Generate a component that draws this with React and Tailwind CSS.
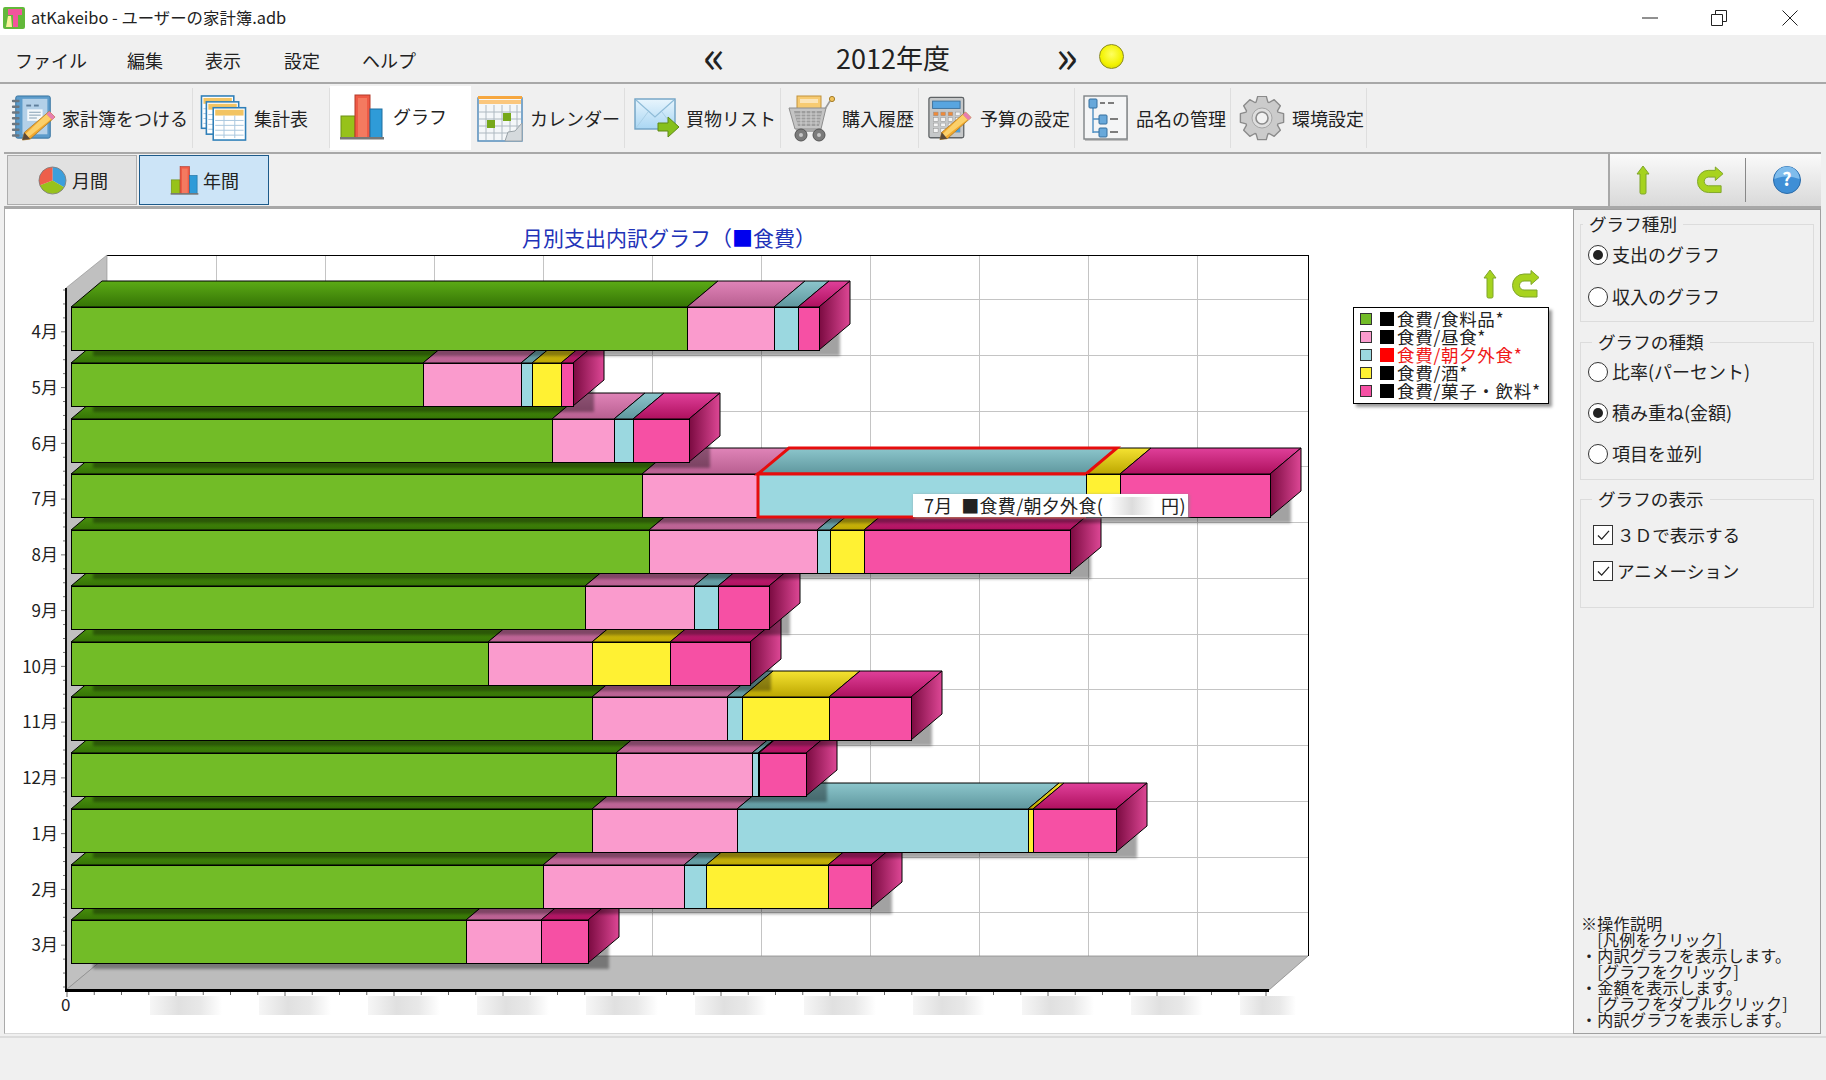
import React from "react";

// Bar ends per month: food, lunch, dining out, alcohol, snacks (page x coordinates)
const MONTHS = [
  ["4月", [687, 774, 798, 798, 819]],
  ["5月", [423, 521, 532, 561, 573]],
  ["6月", [552, 614, 633, 633, 689]],
  ["7月", [642, 758, 1086, 1120, 1270]],
  ["8月", [649, 817, 830, 864, 1070]],
  ["9月", [585, 694, 718, 718, 769]],
  ["10月", [488, 592, 592, 670, 750]],
  ["11月", [592, 727, 742, 829, 911]],
  ["12月", [616, 752, 758, 759, 806]],
  ["1月", [592, 737, 1028, 1033, 1116]],
  ["2月", [543, 684, 706, 828, 871]],
  ["3月", [466, 541, 541, 541, 588]],
];

const FRONT = ["#72bc27", "#fa9bcd", "#9bd8e0", "#fff133", "#f650a4"];
const TOP = [
  ["#5cab16", "#357405"],
  ["#e084b8", "#b85f90"],
  ["#8cc6cc", "#5f979e"],
  ["#f5e332", "#bca600"],
  ["#e0409a", "#ae105e"],
];
const BAR_H = 43;
const DX = 31;
const DY = 26;
const X0 = 71;

const rowTop = (i) => Math.round(307 + 55.75 * i);

const GRID_X = Array.from({ length: 11 }, (_, k) => 107 + 109 * k);
const GRID_Y = Array.from({ length: 12 }, (_, k) => Math.round(299 + 55.75 * k));

function BarRow({ index, ends }) {
  const top = rowTop(index);
  const bottom = top + BAR_H;
  const last = ends[4];
  const starts = [X0, ...ends.slice(0, 4)];
  return (
    <g>
      <rect x={X0 + 22} y={top + 16} width={last - X0 - 1} height={BAR_H - 10} fill="#000" opacity="0.36" filter="url(#soft)" />
      {ends.map((end, s) => {
        const start = starts[s];
        if (end <= start) return null;
        return (
          <polygon
            key={s}
            points={`${start},${top} ${start + DX},${top - DY} ${end + DX},${top - DY} ${end},${top}`}
            fill={`url(#top${s})`}
            stroke="#000"
          />
        );
      })}
      <polygon
        points={`${last},${top} ${last + DX},${top - DY} ${last + DX},${bottom - DY} ${last},${bottom}`}
        fill="url(#side)"
        stroke="#000"
      />
      {ends.map((end, s) => {
        const start = starts[s];
        if (end <= start) return null;
        return <rect key={s} x={start} y={top} width={end - start} height={BAR_H} fill={FRONT[s]} stroke="#000" shapeRendering="crispEdges" />;
      })}
    </g>
  );
}

function Chart() {
  const sel = { x1: 758, x2: 1086, top: rowTop(3) };
  const leftTicks = Array.from({ length: 51 }, (_, k) => 290 + 13.94 * k);
  const bottomTicks = Array.from({ length: 45 }, (_, k) => 67 + 27.25 * k);
  return (
    <svg width="1568" height="824" viewBox="5 209 1568 824" className="block">
      <defs>
        {TOP.map((c, s) => (
          <linearGradient key={s} id={`top${s}`} x1="0" y1="0" x2="0" y2="1">
            <stop offset="0" stopColor={c[0]} />
            <stop offset="1" stopColor={c[1]} />
          </linearGradient>
        ))}
        <linearGradient id="side" x1="0" y1="0" x2="1" y2="0">
          <stop offset="0" stopColor="#7a0a40" />
          <stop offset="1" stopColor="#dd4795" />
        </linearGradient>
        <linearGradient id="smudge" x1="0" y1="0" x2="1" y2="0">
          <stop offset="0" stopColor="#f6f6f6" />
          <stop offset="0.4" stopColor="#e0e0e0" />
          <stop offset="0.7" stopColor="#e8e8e8" />
          <stop offset="1" stopColor="#ffffff" />
        </linearGradient>
        <filter id="soft" x="-5%" y="-30%" width="110%" height="160%">
          <feGaussianBlur stdDeviation="1.6" />
        </filter>
      </defs>

      <text x="669" y="246" textAnchor="middle" fontSize="21" fill="#2233b8">
        月別支出内訳グラフ（<tspan fill="#0000ee">■</tspan>食費）
      </text>

      {/* walls and floor */}
      <rect x="107" y="255" width="1201" height="701" fill="#fff" />
      {GRID_X.slice(0, 10).map((x) => (
        <line key={x} x1={x + 109} y1="255" x2={x + 109} y2="956" stroke="#c4c4c4" shapeRendering="crispEdges" />
      ))}
      {GRID_Y.map((y) => (
        <line key={y} x1="107" y1={y} x2="1308" y2={y} stroke="#c4c4c4" shapeRendering="crispEdges" />
      ))}
      <line x1="107" y1="255" x2="1308" y2="255" stroke="#000" shapeRendering="crispEdges" />
      <line x1="1308" y1="255" x2="1308" y2="956" stroke="#000" shapeRendering="crispEdges" />
      <polygon points="66,288 107,255 107,956 66,990" fill="#c0c0c0" stroke="#8a8a8a" strokeWidth="0.6" />
      <polygon points="66,990 107,956 1308,956 1269,990" fill="#bcbcbc" stroke="#8a8a8a" strokeWidth="0.8" />

      {/* bars, bottom row first so the row above covers its top face */}
      {MONTHS.map((_, i) => MONTHS.length - 1 - i).map((i) => (
        <BarRow key={i} index={i} ends={MONTHS[i][1]} />
      ))}

      {/* selected segment: red on every edge but the right one of the front */}
      <polygon
        points={`${sel.x1},${sel.top} ${sel.x1 + DX},${sel.top - DY} ${sel.x2 + DX},${sel.top - DY} ${sel.x2},${sel.top}`}
        fill="url(#top2)"
        stroke="#e60d0d"
        strokeWidth="3"
      />
      <rect x={sel.x1} y={sel.top} width={sel.x2 - sel.x1} height={BAR_H} fill={FRONT[2]} stroke="#000" shapeRendering="crispEdges" />
      <path
        d={`M${sel.x2} ${sel.top} H${sel.x1} V${sel.top + BAR_H} H${sel.x2}`}
        fill="none"
        stroke="#e60d0d"
        strokeWidth="3"
      />

      {/* axes */}
      <rect x="65" y="288" width="2" height="703" fill="#111" />
      <rect x="65" y="989" width="1204" height="3" fill="#000" />
      {leftTicks.map((y, k) => (
        <line key={k} x1={k % 4 === 3 ? 61 : 63} y1={y} x2="65" y2={y} stroke="#777" />
      ))}
      {bottomTicks.map((x, k) => (
        <line key={k} x1={x} y1="992" x2={x} y2={k % 4 === 0 ? 997 : 995} stroke="#666" />
      ))}

      {MONTHS.map(([label], i) => (
        <text key={label} x="58" y={rowTop(i) + 31} textAnchor="end" fontSize="17" fill="#222">
          {label}
        </text>
      ))}
      <text x="61" y="1011" fontSize="17" fill="#222">0</text>
      {GRID_X.map((_, k) => (
        <rect key={k} x={150 + 109 * k} y="996" width={k === 10 ? 56 : 72} height="19" fill="url(#smudge)" />
      ))}
    </svg>
  );
}

function UpArrow({ className }) {
  return (
    <svg viewBox="0 0 14 30" className={className}>
      <path d="M7 1 L13 9 H10 V27.5 a1.5 1.5 0 0 1 -1.5 1.5 H5.5 a1.5 1.5 0 0 1 -1.5 -1.5 V9 H1 Z" fill="#a5d31f" stroke="#7fa52a" strokeWidth="1" />
    </svg>
  );
}

function TurnArrow({ className }) {
  return (
    <svg viewBox="0 0 28 28" className={className}>
      <path d="M27 7.5 L19 0.5 V4 H12 A10.5 10.5 0 0 0 12 27 H25 V20 H12 A3.7 3.7 0 0 1 12 11 H19 V14.5 Z" fill="#a8d31f" stroke="#7fa52a" strokeWidth="1" />
    </svg>
  );
}

function Pencil() {
  return (
    <g>
      <polygon points="41,17 47,23 21,46 13,47 15,39" fill="#f3a92e" stroke="#a9761f" strokeWidth="0.8" />
      <polygon points="38,20 43,25 19,44 16,41" fill="#fbd06a" />
      <polygon points="41,17 47,23 44,26 38,20" fill="#e77fb0" />
      <polygon points="15,39 21,46 13,47" fill="#5a4a3a" />
    </g>
  );
}

function NotebookIcon() {
  return (
    <svg viewBox="0 0 48 48" className="w-[48px] h-[46px]">
      <rect x="6" y="1" width="36" height="44" rx="2" fill="#5d9ccb" stroke="#33719f" />
      <rect x="13" y="4" width="26" height="37" fill="#b3d0e8" />
      <rect x="17" y="10" width="5" height="2" fill="#5f7f9c" />
      <rect x="25" y="10" width="5" height="2" fill="#5f7f9c" />
      <rect x="18" y="15" width="16" height="12" fill="#f4f8fb" />
      <path d="M20 18 H32 M20 21 H32 M20 24 H28" stroke="#7f9bb0" fill="none" />
      {[5, 11, 17, 23, 29, 35, 41].map((y) => (
        <rect key={y} x="2" y={y} width="8" height="2.6" rx="1" fill="#6a7680" />
      ))}
      <Pencil />
    </svg>
  );
}

function Sheet({ x, y }) {
  return (
    <g>
      <rect x={x} y={y} width="33" height="33" fill="#fff" stroke="#2f7fb8" strokeWidth="1.6" />
      <rect x={x + 2} y={y + 2} width="29" height="6" fill="#f2c463" />
      {[13, 18, 23, 28].map((d) => (
        <line key={d} x1={x + 2} y1={y + d} x2={x + 31} y2={y + d} stroke="#a9c7de" />
      ))}
      {[11, 22].map((d) => (
        <line key={d} x1={x + d} y1={y + 8} x2={x + d} y2={y + 31} stroke="#a9c7de" />
      ))}
    </g>
  );
}

function TablesIcon() {
  return (
    <svg viewBox="0 0 48 48" className="w-[48px] h-[47px]">
      <Sheet x={1} y={1} />
      <Sheet x={6} y={7} />
      <Sheet x={13} y={13} />
    </svg>
  );
}

function BarsIcon({ className }) {
  return (
    <svg viewBox="0 0 46 46" className={className}>
      <rect x="2" y="22" width="14" height="22" fill="#97c21a" stroke="#6d8f14" />
      <rect x="16" y="1" width="15" height="43" fill="#ee5a45" stroke="#b53a2a" />
      <rect x="19" y="4" width="9" height="40" fill="#f47a60" />
      <rect x="31" y="15" width="12" height="29" fill="#2f9bd8" stroke="#1f6f9f" />
      <rect x="1" y="43" width="44" height="2.5" fill="#777" />
    </svg>
  );
}

function CalendarIcon() {
  return (
    <svg viewBox="0 0 46 47" className="w-[46px] h-[47px]">
      <rect x="1" y="3" width="44" height="43" fill="#f4f7f9" stroke="#4a86b8" strokeWidth="1.4" />
      <rect x="1" y="1" width="44" height="3" fill="#f6a73f" />
      <rect x="2" y="5" width="42" height="4" fill="#fbc77d" />
      {[17, 24, 31, 38].map((y) => (
        <line key={y} x1="2" y1={y} x2="44" y2={y} stroke="#aeb9c1" />
      ))}
      {[9, 17, 25, 33, 40].map((x) => (
        <line key={x} x1={x} y1="10" x2={x} y2="45" stroke="#aeb9c1" />
      ))}
      <rect x="10" y="25" width="8" height="8" fill="#76a81a" />
      <rect x="26" y="18" width="8" height="8" fill="#76a81a" />
      <polygon points="45,28 45,46 28,46 31,37 38,36" fill="#d5dadd" stroke="#9aa3a8" />
    </svg>
  );
}

function MailIcon() {
  return (
    <svg viewBox="0 0 46 41" className="w-[46px] h-[41px]">
      <defs>
        <linearGradient id="mailFill" x1="0" y1="0" x2="0" y2="1">
          <stop offset="0" stopColor="#e8f5fd" />
          <stop offset="1" stopColor="#a9d6f3" />
        </linearGradient>
      </defs>
      <rect x="1" y="1" width="40" height="30" fill="url(#mailFill)" stroke="#6fa2c4" strokeWidth="1.4" />
      <polyline points="2,2 21,19 40,2" fill="none" stroke="#8fbcd8" strokeWidth="1.2" />
      <line x1="2" y1="30" x2="14" y2="14" stroke="#a9cfe6" />
      <line x1="40" y1="30" x2="28" y2="14" stroke="#a9cfe6" />
      <polygon points="24,25 34,25 34,19 45,29 34,39 34,33 24,33" fill="#86c01c" stroke="#5f8a16" />
    </svg>
  );
}

function CartIcon() {
  return (
    <svg viewBox="0 0 48 47" className="w-[48px] h-[47px]">
      <rect x="9" y="1" width="24" height="14" fill="#f7cb72" stroke="#c2923b" />
      <rect x="12" y="4" width="18" height="4" fill="#fff" opacity="0.5" />
      <polygon points="1,13 38,13 33,34 7,34" fill="#c4c4c4" stroke="#8c8c8c" />
      <polygon points="6,16 34,16 31,31 10,31" fill="#9d9d9d" />
      <path d="M7 19 H33 M8 22 H33 M9 25 H32 M9 28 H31 M13 16 V31 M18 16 V31 M23 16 V31 M28 16 V31" stroke="#cfcfcf" strokeWidth="1" fill="none" />
      <path d="M37 14 L42 6" stroke="#999" strokeWidth="1.6" fill="none" />
      <circle cx="44" cy="4" r="2.6" fill="#f1c35c" stroke="#a47d2a" />
      <rect x="8" y="34" width="25" height="3" fill="#a8a8a8" />
      <circle cx="13" cy="40" r="6" fill="#7b7b7b" stroke="#555" />
      <circle cx="13" cy="40" r="2" fill="#c6c6c6" />
      <circle cx="31" cy="40" r="6" fill="#7b7b7b" stroke="#555" />
      <circle cx="31" cy="40" r="2" fill="#c6c6c6" />
    </svg>
  );
}

function CalcIcon() {
  return (
    <svg viewBox="0 0 48 48" className="w-[44px] h-[45px]">
      <rect x="1" y="1" width="38" height="44" rx="2" fill="#c6c8c9" stroke="#5f6366" strokeWidth="1.4" />
      <rect x="5" y="5" width="30" height="8" fill="#58a5e0" stroke="#3b6f9a" />
      {[17, 23, 29, 35].map((y) =>
        [6, 14, 22, 30].map((x) => (
          <rect key={`${x}-${y}`} x={x} y={y} width="5" height="4" fill={y === 17 && x < 28 ? "#ef8a3a" : "#f4f4f4"} stroke="#8f8f8f" strokeWidth="0.5" />
        ))
      )}
      <rect x="30" y="29" width="5" height="10" fill="#4f9fdc" />
      <Pencil />
    </svg>
  );
}

function TreeIcon() {
  return (
    <svg viewBox="0 0 46 47" className="w-[46px] h-[47px]">
      <rect x="2" y="3" width="43" height="43" fill="#8e8e8e" opacity="0.5" />
      <rect x="1" y="1" width="43" height="43" fill="#f4f5f6" stroke="#7f8487" strokeWidth="1.4" />
      <path d="M10 12 V38 M10 24 H16 M10 37 H16" stroke="#4f8fc2" fill="none" strokeWidth="1.4" />
      <path d="M17 8 H22 M25 8 H31 M27 24 H35 M27 37 H35" stroke="#555" strokeWidth="1.4" fill="none" />
      <rect x="6" y="4" width="8" height="9" rx="1" fill="#68a8da" stroke="#356f9e" />
      <rect x="16" y="20" width="8" height="9" rx="1" fill="#68a8da" stroke="#356f9e" />
      <rect x="16" y="33" width="8" height="9" rx="1" fill="#68a8da" stroke="#356f9e" />
    </svg>
  );
}

function GearIcon() {
  const pts = [];
  const teeth = 8;
  for (let t = 0; t < teeth; t++) {
    const a = (t / teeth) * Math.PI * 2;
    const w = Math.PI / teeth;
    [[-1, 17], [-0.55, 22], [0.55, 22], [1, 17]].forEach(([f, r]) => {
      pts.push(`${(23 + r * Math.cos(a + (f * w) / 1.1)).toFixed(1)},${(22 + r * Math.sin(a + (f * w) / 1.1)).toFixed(1)}`);
    });
  }
  return (
    <svg viewBox="0 0 46 45" className="w-[46px] h-[45px]">
      <polygon points={pts.join(" ")} fill="#cbcbcb" stroke="#8b8b8b" strokeWidth="1.4" strokeLinejoin="round" />
      <circle cx="23" cy="22" r="10" fill="#dedede" stroke="#a5a5a5" />
      <circle cx="23" cy="22" r="6" fill="#f2f2f2" stroke="#8b8b8b" strokeWidth="1.6" />
    </svg>
  );
}

function PieIcon() {
  return (
    <svg viewBox="0 0 30 30" className="w-[29px] h-[29px]">
      <path d="M15 15 L15 1 A14 14 0 0 1 27 22 Z" fill="#3c9fdc" />
      <path d="M15 15 L27 22 A14 14 0 0 1 2 20 Z" fill="#98c21c" />
      <path d="M15 15 L2 20 A14 14 0 0 1 15 1 Z" fill="#ee5f4a" />
      <circle cx="15" cy="15" r="14" fill="none" stroke="#777" strokeWidth="0.8" />
    </svg>
  );
}

const TABS = [
  { label: "家計簿をつける", w: 190, pad: 6, gap: 5, icon: <NotebookIcon /> },
  { label: "集計表", w: 137, pad: 7, gap: 6, icon: <TablesIcon /> },
  { label: "グラフ", w: 141, pad: 9, gap: 8, active: true, icon: <BarsIcon className="w-[46px] h-[46px]" /> },
  { label: "カレンダー", w: 154, pad: 6, gap: 7, icon: <CalendarIcon /> },
  { label: "買物リスト", w: 156, pad: 9, gap: 6, icon: <MailIcon /> },
  { label: "購入履歴", w: 138, pad: 7, gap: 6, icon: <CartIcon /> },
  { label: "予算の設定", w: 156, pad: 9, gap: 8, icon: <CalcIcon /> },
  { label: "品名の管理", w: 156, pad: 8, gap: 7, icon: <TreeIcon /> },
  { label: "環境設定", w: 136, pad: 8, gap: 7, icon: <GearIcon /> },
];

function Tab({ tab }) {
  return (
    <div
      style={{ width: tab.w, paddingLeft: tab.pad, columnGap: tab.gap }}
      className={
        tab.active
          ? "flex items-center h-[64px] -mt-[2px] bg-white text-[18px] pb-[3px]"
          : "flex items-center h-[60px] bg-[#f0f0f0] border-r border-[#dedede] text-[18px]"
      }
    >
      <span className="shrink-0 flex">{tab.icon}</span>
      <span className="whitespace-nowrap">{tab.label}</span>
    </div>
  );
}

function Radio({ checked, label }) {
  return (
    <div className="flex items-center gap-[4px] h-[20px] text-[18px] whitespace-nowrap">
      <span className="w-[20px] h-[20px] rounded-full border border-[#333] bg-white flex items-center justify-center">
        {checked && <span className="w-[10px] h-[10px] rounded-full bg-[#222]" />}
      </span>
      <span className="-mt-[2px]">{label}</span>
    </div>
  );
}

function Check({ label }) {
  return (
    <div className="flex items-center gap-[4px] h-[20px] text-[17.6px] whitespace-nowrap">
      <span className="w-[20px] h-[20px] border border-[#333] bg-white flex items-center justify-center">
        <svg viewBox="0 0 14 12" className="w-[13px] h-[11px]">
          <path d="M1 6 L5 10 L13 1" fill="none" stroke="#222" strokeWidth="1.4" />
        </svg>
      </span>
      {label}
    </div>
  );
}

function Group({ title, h, className, titleClass, children }) {
  return (
    <div style={{ height: h }} className={`relative border border-[#dcdcdc] ${className}`}>
      <span className={`absolute -top-[14px] px-[6px] bg-[#f0f0f0] text-[17.6px] leading-[26px] whitespace-nowrap ${titleClass}`}>
        {title}
      </span>
      {children}
    </div>
  );
}

const NOTES = [
  "※操作説明",
  "　[凡例をクリック]",
  "・内訳グラフを表示します。",
  "　[グラフをクリック]",
  "・金額を表示します。",
  "　[グラフをダブルクリック]",
  "・内訳グラフを表示します。",
];

const LEGEND = [
  ["#72bc27", "食費/食料品*"],
  ["#fa9bcd", "食費/昼食*"],
  ["#9bd8e0", "食費/朝夕外食*", true],
  ["#fff133", "食費/酒*"],
  ["#f650a4", "食費/菓子・飲料*"],
];

export default function App() {
  return (
    <div className="w-[1826px] h-[1080px] overflow-hidden bg-[#f0f0f0] text-[#222] [text-spacing-trim:space-all] font-['Noto_Sans_CJK_JP','Noto_Sans',sans-serif]">
      {/* title bar */}
      <div className="h-[35px] bg-white flex items-center pl-[3px]">
        <svg viewBox="0 0 22 22" className="w-[22px] h-[22px] shrink-0">
          <rect width="22" height="22" rx="2" fill="#62b83a" />
          <path d="M5 2 H19 V8 H15 V20 H10 V8 H5 Z" fill="#f2559c" />
          <path d="M3 20 L5 9 H8 L9 20 Z" fill="#f7f29a" />
        </svg>
        <span className="ml-[6px] text-[16.4px] whitespace-nowrap">atKakeibo - ユーザーの家計簿.adb</span>
        <div className="ml-auto flex items-center h-full">
          <svg viewBox="0 0 16 16" className="w-[16px] h-[16px] mr-[53px]">
            <line x1="0" y1="8" x2="16" y2="8" stroke="#222" />
          </svg>
          <svg viewBox="0 0 16 16" className="w-[16px] h-[16px] mr-[55px]">
            <path d="M0.5 4.5 H11.5 V15.5 H0.5 Z M4.5 4.5 V0.5 H15.5 V11.5 H11.5" fill="none" stroke="#222" />
          </svg>
          <svg viewBox="0 0 16 16" className="w-[16px] h-[16px] mr-[28px]">
            <path d="M0.5 0.5 L15.5 15.5 M15.5 0.5 L0.5 15.5" stroke="#222" />
          </svg>
        </div>
      </div>

      {/* menu bar */}
      <div className="h-[49px] border-b-2 border-[#a8a8a8] flex items-center pl-[15px] text-[18px]">
        <div className="flex w-[400px] shrink-0 pt-[3px] whitespace-nowrap">
          <span className="w-[112px] shrink-0">ファイル</span>
          <span className="w-[78px] shrink-0">編集</span>
          <span className="w-[79px] shrink-0">表示</span>
          <span className="w-[78px] shrink-0">設定</span>
          <span className="shrink-0">ヘルプ</span>
        </div>
        <span className="ml-[288px] w-[23px] text-[46px] leading-none -mt-[12px]">«</span>
        <span className="ml-[110px] text-[27px] whitespace-nowrap w-[220px]">2012年度</span>
        <span className="text-[46px] leading-none -mt-[12px] w-[43px]">»</span>
        <span className="w-[25px] h-[25px] -mt-[4px] rounded-full border border-[#8a8a20] bg-[radial-gradient(circle_at_50%_40%,#ffff60,#f2f200_60%,#c8c800)]" />
      </div>

      {/* main tabs */}
      <div className="h-[68px] pl-[3px] pt-[4px] flex items-start">
        {TABS.map((tab) => (
          <Tab key={tab.label} tab={tab} />
        ))}
      </div>

      {/* panel */}
      <div className="mx-[4px] mr-[5px] border-t-2 border-[#a8a8a8]">
        <div className="h-[55px] flex border-b-[3px] border-[#a8a8a8]">
          <div className="flex items-start pl-[3px] pt-[1px] gap-[2px]">
            <div className="w-[130px] h-[50px] bg-[#e1e1e1] border border-[#adadad] flex items-center pl-[30px] gap-[5px] text-[18px]">
              <PieIcon />
              月間
            </div>
            <div className="w-[130px] h-[50px] bg-[#cce4f7] border border-[#1c5a8a] flex items-center pl-[30px] gap-[4px] text-[18px]">
              <BarsIcon className="w-[29px] h-[29px]" />
              年間
            </div>
          </div>
          <div className="ml-auto w-[213px] border-l-2 border-[#a8a8a8] bg-gradient-to-b from-[#fafafa] to-[#d9d9d9] flex items-center">
            <UpArrow className="w-[14px] h-[30px] ml-[26px]" />
            <TurnArrow className="w-[27px] h-[28px] ml-[47px]" />
            <span className="w-px h-[44px] bg-[#888] ml-[21px]" />
            <svg viewBox="0 0 28 28" className="w-[28px] h-[28px] ml-[27px]">
              <circle cx="14" cy="14" r="13.5" fill="#3f8fd6" stroke="#2a6aa8" />
              <path d="M1.5 13 A12.5 12.5 0 0 1 26.5 13 Q14 8 1.5 13 Z" fill="#7fbcec" />
              <text x="14" y="20" textAnchor="middle" fontSize="18" fontWeight="700" fill="#fff">?</text>
            </svg>
          </div>
        </div>

        <div className="flex h-[825px]">
          {/* chart */}
          <div className="relative w-[1569px] h-full bg-white border-l border-[#aaa] border-b border-b-[#d8d8d8]">
            <Chart />
            <UpArrow className="absolute left-[1478px] top-[60px] w-[14px] h-[30px]" />
            <TurnArrow className="absolute left-[1507px] top-[61px] w-[28px] h-[28px]" />
            <div className="absolute left-[1348px] top-[98px] w-[196px] h-[97px] bg-white border border-black shadow-[3px_3px_3px_#999] pt-[2px] pl-[6px]">
              {LEGEND.map(([color, label, on]) => (
                <div key={label} className="h-[18px] flex items-center text-[17.5px] leading-[18px] tracking-[0.7px] whitespace-nowrap">
                  <span style={{ background: color }} className="w-[12px] h-[12px] border border-[#333]" />
                  <span className={on ? "ml-[8px] w-[14px] h-[14px] bg-[#ff0000]" : "ml-[8px] w-[14px] h-[14px] bg-black"} />
                  <span className={on ? "ml-[3px] text-[#f01818]" : "ml-[3px]"}>{label}</span>
                </div>
              ))}
            </div>
            <div className="absolute left-[908px] top-[285px] w-[275px] h-[23px] bg-white shadow-[1px_1px_3px_#888] flex items-center pl-[11px] text-[18px] tracking-[0.3px] whitespace-nowrap">
              <span>7月&nbsp;&nbsp;■食費/朝夕外食(</span>
              <span className="w-[46px] h-[18px] mx-[6px] bg-gradient-to-r from-white via-[#dcdcdc] to-white" />
              <span>円)</span>
            </div>
          </div>

          {/* side panel */}
          <div className="w-[248px] h-full border border-[#a0a0a0] relative px-[6px] pt-[14px]">
            <Group title="グラフ種別" h={98} className="" titleClass="left-[2px]">
              <div className="pl-[7px] pt-[20px] flex flex-col gap-[22px]">
                <Radio checked label="支出のグラフ" />
                <Radio label="収入のグラフ" />
              </div>
            </Group>
            <Group title="グラフの種類" h={138} className="mt-[20px]" titleClass="left-[11px]">
              <div className="pl-[7px] pt-[19px] flex flex-col gap-[21px]">
                <Radio label="比率(パーセント)" />
                <Radio checked label="積み重ね(金額)" />
                <Radio label="項目を並列" />
              </div>
            </Group>
            <Group title="グラフの表示" h={109} className="mt-[19px]" titleClass="left-[11px]">
              <div className="pl-[12px] pt-[25px] flex flex-col gap-[16px]">
                <Check label="３Ｄで表示する" />
                <Check label="アニメーション" />
              </div>
            </Group>
            <div className="absolute left-[7px] bottom-[6px] text-[16px] leading-[16px] tracking-[0.3px] whitespace-pre">
              {NOTES.map((line, i) => (
                <div key={i}>{line}</div>
              ))}
            </div>
          </div>
        </div>
      </div>

      {/* status bar */}
      <div className="mt-[2px] border-t-2 border-[#dcdcdc] h-[44px]" />
    </div>
  );
}
